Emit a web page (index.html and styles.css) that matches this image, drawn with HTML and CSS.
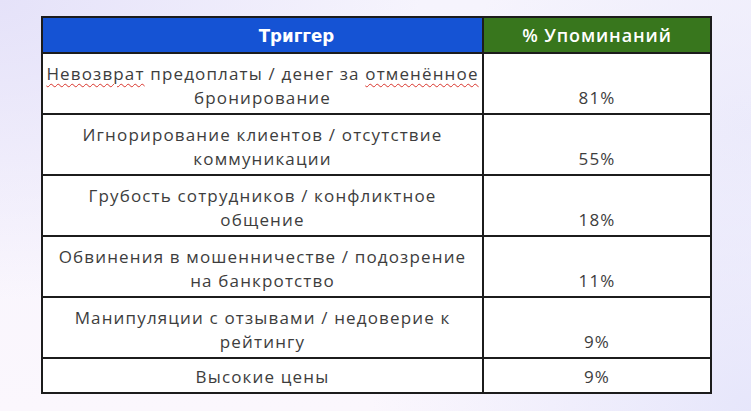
FILE: index.html
```html
<!DOCTYPE html>
<html lang="ru">
<head>
<meta charset="utf-8">
<link rel="stylesheet" href="styles.css">
</head>
<body>
<div class="page">
  <table class="triggers">
    <colgroup><col class="c1"><col class="c2"></colgroup>
    <thead>
      <tr>
        <th class="h-blue">Триггер</th>
        <th class="h-green">% Упоминаний</th>
      </tr>
    </thead>
    <tbody>
      <tr class="tall">
        <td><span class="spell">Невозврат</span> предоплаты / денег за <span class="spell">отменённое</span><br>бронирование</td>
        <td>81%</td>
      </tr>
      <tr class="tall">
        <td>Игнорирование клиентов / отсутствие<br>коммуникации</td>
        <td>55%</td>
      </tr>
      <tr class="tall">
        <td>Грубость сотрудников / конфликтное<br>общение</td>
        <td>18%</td>
      </tr>
      <tr class="tall">
        <td>Обвинения в мошенничестве / подозрение<br>на банкротство</td>
        <td>11%</td>
      </tr>
      <tr class="tall">
        <td>Манипуляции с отзывами / недоверие к<br>рейтингу</td>
        <td>9%</td>
      </tr>
      <tr class="short">
        <td>Высокие цены</td>
        <td>9%</td>
      </tr>
    </tbody>
  </table>
</div>
</body>
</html>
```
FILE: styles.css
```css
html, body {
  margin: 0;
  padding: 0;
  width: 751px;
  height: 411px;
  overflow: hidden;
}
body {
  background:
    radial-gradient(ellipse 420px 300px at 0% 0%, #e5e2f9 0%, rgba(229,226,249,0) 100%),
    radial-gradient(ellipse 380px 320px at 100% 100%, #e6e6fb 0%, rgba(230,230,251,0) 100%),
    radial-gradient(ellipse 300px 260px at 100% 30%, #ecebfb 0%, rgba(236,235,251,0) 100%),
    linear-gradient(180deg, #f6f4fd 0%, #fbf7fd 100%);
  font-family: "Open Sans", "Noto Sans", sans-serif;
}
.page {
  padding: 16px 0 0 41px;
}
.triggers {
  border-collapse: collapse;
  width: 669px;
  table-layout: fixed;
  background: #fff;
}
.c1 { width: 441px; }
.c2 { width: 228px; }
.triggers th,
.triggers td {
  border: 2px solid #1c1c1c;
  text-align: center;
}
.triggers th {
  height: 34px;
  padding: 0 4px;
  color: #fff;
  vertical-align: middle;
}
.h-blue {
  background: #1553d4;
  font-family: "DejaVu Sans Condensed", "DejaVu Sans", sans-serif;
  font-stretch: condensed;
  font-weight: 700;
  font-size: 18.5px;
  padding-left: 72px !important;
}
.h-green {
  background: #38761d;
  font-weight: 600;
  font-size: 18px;
  letter-spacing: 0.9px;
}
.triggers td {
  color: #3d3d3d;
  font-size: 17px;
  letter-spacing: 1.15px;
  line-height: 24px;
  padding: 0 0 3px;
  white-space: nowrap;
  vertical-align: bottom;
}
.tall td { height: 56px; }
.short td { height: 30px; }
.spell {
  text-decoration: underline wavy #d9342b;
  text-decoration-thickness: 1px;
  text-underline-offset: 3px;
}
```
